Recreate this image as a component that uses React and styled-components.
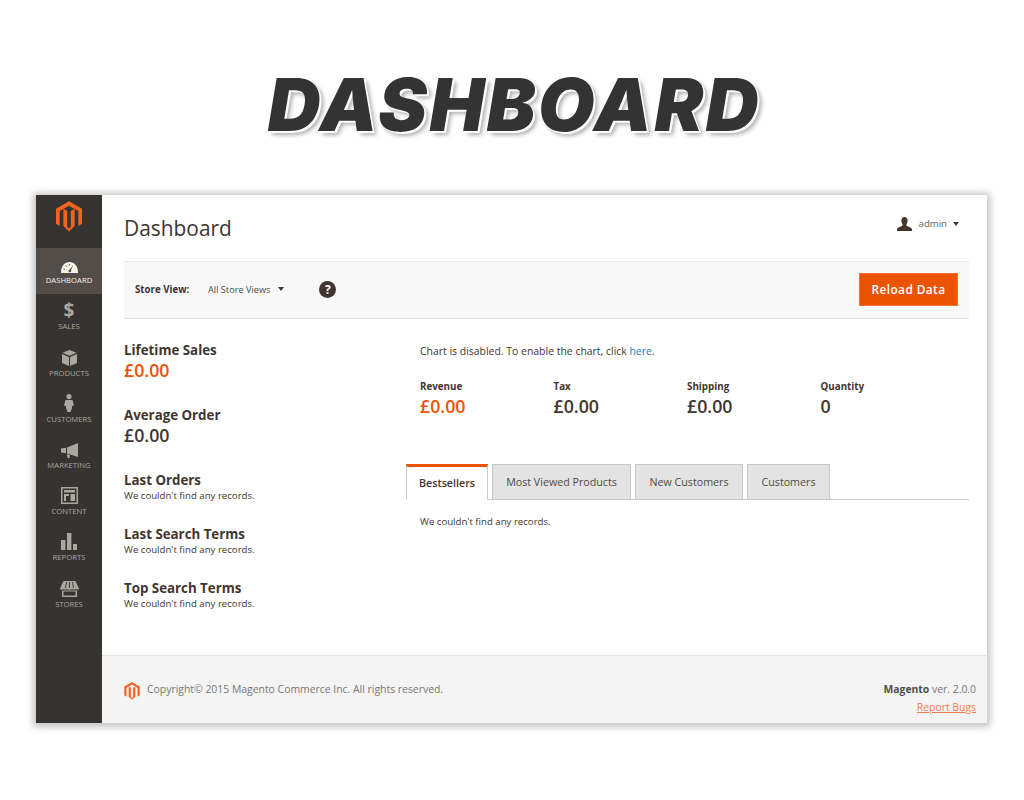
import React from "react";
import styled, { createGlobalStyle } from "styled-components";

const GlobalStyle = createGlobalStyle`
  html, body { margin: 0; padding: 0; background: #fff; }
  body { font-family: "Open Sans", "Liberation Sans", sans-serif; color: #41362f; }
  * { box-sizing: border-box; }
`;

const Page = styled.div`
  width: 1024px;
  height: 800px;
  padding: 0 37px 0 36px;
  overflow: hidden;
`;

const BigTitle = styled.h1`
  height: 195px;
  margin: 0;
  padding: 62px 0 0 6px;
  text-align: center;
  font-family: Inter, "Liberation Sans", sans-serif;
  font-size: 73px;
  line-height: 86px;
  font-weight: 900;
  font-style: italic;
  color: #333;
  letter-spacing: 2.6px;
  text-shadow: 1px 1px 0 #fff, 2px 2px 0 #fff, 4px 4px 4px rgba(0, 0, 0, 0.32);
`;

const Frame = styled.div`
  display: flex;
  height: 528px;
  box-shadow: 0 1px 7px 3px rgba(0, 0, 0, 0.24);
`;

const Sidebar = styled.nav`
  width: 66px;
  flex: none;
  background: #373330;
`;

const LogoCell = styled.div`
  height: 53px;
  display: flex;
  justify-content: center;
  padding-top: 6px;
`;

const NavItem = styled.div`
  height: 46.2px;
  display: flex;
  flex-direction: column;
  align-items: center;
  justify-content: flex-end;
  padding-bottom: 8px;
  background: ${p => (p.$active ? "#524d49" : "transparent")};
  color: ${p => (p.$active ? "#f7f3eb" : "#aaa6a0")};
`;

const NavIcon = styled.div`
  height: 18px;
  display: flex;
  align-items: flex-end;
  justify-content: center;
  font-size: 19px;
  line-height: 18px;
  font-weight: 700;
  margin-bottom: 2px;
`;

const NavLabel = styled.span`
  font-size: 7.7px;
  line-height: 11px;
  text-transform: uppercase;
  white-space: nowrap;
`;

const Main = styled.main`
  flex: 1;
  display: flex;
  flex-direction: column;
  min-width: 0;
`;

const Content = styled.div`
  flex: 1;
  padding: 0 18px 0 22px;
`;

const Header = styled.header`
  height: 66px;
  display: flex;
  align-items: center;
  justify-content: space-between;
`;

const PageTitle = styled.h2`
  margin: 0;
  font-size: 20.9px;
  font-weight: 400;
  color: #41362f;
`;

const UserBox = styled.div`
  display: flex;
  align-items: center;
  margin: -9px 10px 0 0;
  font-size: 9.6px;
  color: #676056;
`;

const UserName = styled.span`
  margin: 0 6px 0 7px;
`;

const Caret = styled.i`
  display: inline-block;
  border-left: 3px solid transparent;
  border-right: 3px solid transparent;
  border-top: 4px solid #41362f;
`;

const Toolbar = styled.div`
  height: 58px;
  display: flex;
  align-items: center;
  padding: 0 11px 2px;
  background: #f8f8f8;
  border-top: 1px solid #e9e9e9;
  border-bottom: 1px solid #e3e3e3;
`;

const StoreLabel = styled.span`
  width: 73px;
  font-size: 9.7px;
  font-weight: 700;
  color: #41362f;
`;

const StoreValue = styled.span`
  font-size: 9.2px;
  color: #514943;
  margin-right: 7px;
`;

const ToolbarCaret = styled(Caret)`
  margin-left: 1px;
`;

const HelpBadge = styled.span`
  width: 17px;
  height: 17px;
  margin-left: 35px;
  border-radius: 50%;
  background: #41362f;
  color: #fff;
  font-size: 12px;
  font-weight: 700;
  line-height: 17px;
  text-align: center;
`;

const ReloadButton = styled.button`
  width: 99px;
  height: 33px;
  margin-left: auto;
  border: 1px solid #f0722d;
  background: #eb5202;
  color: #fff;
  font-family: "Open Sans", sans-serif;
  font-size: 11.9px;
  font-weight: 600;
  letter-spacing: 0.4px;
  padding: 0;
`;

const Columns = styled.div`
  display: flex;
`;

const LeftColumn = styled.section`
  width: 282px;
  flex: none;
  padding-top: 22px;
`;

const Metric = styled.div`
  height: 65px;
`;

const MetricTitle = styled.div`
  font-size: 13.3px;
  line-height: 19px;
  font-weight: 700;
  color: #41362f;
`;

const MetricValue = styled.div`
  font-size: 17.8px;
  line-height: 23px;
  margin-top: -1px;
  font-weight: 600;
  color: ${p => (p.$accent ? "#eb5202" : "#41362f")};
`;

const RecordBlock = styled.div`
  height: 54px;
`;

const SmallText = styled.div`
  font-size: 9.65px;
  line-height: 12px;
  color: #41362f;
`;

const RightColumn = styled.section`
  flex: 1;
  min-width: 0;
  padding-top: 24px;
`;

const ChartNote = styled.p`
  margin: 0 0 0 14px;
  font-size: 10.45px;
  line-height: 16px;
  color: #41362f;
`;

const HereLink = styled.a`
  color: #1979c3;
`;

const Stats = styled.div`
  display: grid;
  grid-template-columns: repeat(4, 133.5px);
  margin: 21px 0 0 14px;
`;

const StatLabel = styled.div`
  font-size: 9.8px;
  line-height: 14px;
  font-weight: 700;
  color: #41362f;
`;

const StatValue = styled.div`
  font-size: 17.8px;
  line-height: 24px;
  font-weight: 600;
  color: ${p => (p.$accent ? "#eb5202" : "#41362f")};
`;

const Tabs = styled.div`
  display: flex;
  gap: 4px;
  height: 36px;
  margin-top: 46px;
  border-bottom: 1px solid #c9c9c9;
`;

const Tab = styled.div`
  width: ${p => p.$width}px;
  height: ${p => (p.$active ? 36 : 35)}px;
  display: flex;
  align-items: center;
  justify-content: center;
  font-size: 10.7px;
  font-weight: ${p => (p.$active ? 600 : 400)};
  color: ${p => (p.$active ? "#41362f" : "#514943")};
  background: ${p => (p.$active ? "#fff" : "#e3e3e3")};
  border: 1px solid #c9c9c9;
  border-bottom: ${p => (p.$active ? "1px solid #fff" : "none")};
  border-top: ${p => (p.$active ? "3px solid #eb5202" : "1px solid #c9c9c9")};
`;

const TabBody = styled(SmallText)`
  margin: 16px 0 0 14px;
`;

const Footer = styled.footer`
  height: 68px;
  flex: none;
  display: flex;
  justify-content: space-between;
  padding: 26px 11px 0 22px;
  background: #f4f4f4;
  border-top: 1px solid #e3e3e3;
`;

const Copyright = styled.div`
  display: flex;
  align-items: flex-start;
  gap: 7px;
  font-size: 10.42px;
  line-height: 15px;
  color: #777;
`;

const Version = styled.div`
  text-align: right;
  font-size: 10.4px;
  line-height: 15px;
  color: #777;
`;

const VersionName = styled.b`
  color: #4f4f4f;
  font-weight: 700;
`;

const BugLink = styled.a`
  display: block;
  margin-top: 3px;
  color: #f47a52;
  text-decoration: underline;
`;

const MagentoLogo = ({ size, height, color = "#f26322" }) => (
  <svg width={size} height={height} viewBox="0 0 24 28" fill={color}>
    <path d="M12 0 24 6.9V20.8L20.6 22.8V8.9L12 4 3.4 8.9V22.8L0 20.8V6.9Z" />
    <path d="M13.7 23.8V8.9L17.2 6.9V22.8L12 27.8 6.8 22.8V6.9L10.3 8.9V23.8L12 24.8Z" />
  </svg>
);

const GaugeIcon = () => (
  <svg width="17" height="11" viewBox="0 0 17 11" fill="currentColor">
    <path d="M0 11C-.2 4.5 3.5 0 8.5 0S17.2 4.5 17 11Z" />
    <path d="M8 8.5 12.2 3 9.6 9.2Z" fill="#524d49" />
    <circle cx="8.8" cy="9" r="1.3" fill="#524d49" />
    <path d="M2.5 7 4 7.4M4.8 3.5 5.7 4.6M8.5 2V3.4" stroke="#524d49" fill="none" />
  </svg>
);

const BoxIcon = () => (
  <svg width="15" height="16" viewBox="0 0 15 16" fill="currentColor">
    <path d="M7.5 0 14.5 2.8 7.5 5.8 .5 2.8Z" />
    <path d="M0 4 7 7V16L0 13Z" />
    <path d="M15 4 8 7V16L15 13Z" />
  </svg>
);

const PersonIcon = () => (
  <svg width="10" height="18" viewBox="0 0 10 18" fill="currentColor">
    <circle cx="5" cy="2.6" r="2.6" />
    <path d="M1.5 6H8.5L10 11.5 8 12V14L6.5 18H3.5L2 14V12L0 11.5Z" />
  </svg>
);

const MegaphoneIcon = () => (
  <svg width="17" height="15" viewBox="0 0 17 15" fill="currentColor">
    <path d="M17 0V14L6 10.5V4.5Z" />
    <path d="M0 5.5 5 4.8V10.2L0 9.5Z" />
    <path d="M6 11 9 12 8.5 15H6.5Z" />
  </svg>
);

const ContentIcon = () => (
  <svg width="17" height="17" viewBox="0 0 17 17" fill="none" stroke="currentColor">
    <rect x=".75" y=".75" width="15.5" height="15.5" strokeWidth="1.5" />
    <path d="M3 3H14V5.5H3ZM3 7H8V14H3ZM9.5 7H14V14H9.5Z" fill="currentColor" stroke="none" />
    <path d="M5 9H8V14H5Z" fill="#373330" stroke="none" />
  </svg>
);

const ReportsIcon = () => (
  <svg width="16" height="17" viewBox="0 0 16 17" fill="currentColor">
    <rect x="0" y="7" width="4.4" height="10" />
    <rect x="6" y="0" width="4.4" height="17" />
    <rect x="12" y="11" width="4" height="6" />
  </svg>
);

const StoreIcon = () => (
  <svg width="19" height="16" viewBox="0 0 19 16" fill="currentColor">
    <path d="M3.5 0H15.5L19 7.5C19 9 16.5 9 15.5 8 14.5 9 13 9 12.5 8 11.5 9 7.5 9 6.5 8 6 9 4.5 9 3.5 8 2.5 9 0 9 0 7.5Z" />
    <path d="M2 9.5H17V16H2ZM3.5 10.5V14.5H15.5V10.5Z" fillRule="evenodd" />
    <path d="M6.5 1 5.5 7M9.5 1V7M12.5 1 13.5 7" stroke="#373330" strokeWidth=".9" />
  </svg>
);

const UserIcon = () => (
  <svg width="15" height="14" viewBox="0 0 15 14" fill="#41362f">
    <path d="M4.4 3.6C4.4 1.4 5.7 0 7.5 0S10.6 1.4 10.6 3.6 9.6 7.4 9.3 8C9.2 9.3 14.4 10 15 12.2V14H0V12.2C.6 10 5.8 9.3 5.7 8 5.4 7.4 4.4 5.8 4.4 3.6Z" />
  </svg>
);

const navItems = [
  { label: "Dashboard", icon: <GaugeIcon />, active: true },
  { label: "Sales", icon: "$" },
  { label: "Products", icon: <BoxIcon /> },
  { label: "Customers", icon: <PersonIcon /> },
  { label: "Marketing", icon: <MegaphoneIcon /> },
  { label: "Content", icon: <ContentIcon /> },
  { label: "Reports", icon: <ReportsIcon /> },
  { label: "Stores", icon: <StoreIcon /> },
];

const stats = [
  { label: "Revenue", value: "£0.00", accent: true },
  { label: "Tax", value: "£0.00" },
  { label: "Shipping", value: "£0.00" },
  { label: "Quantity", value: "0" },
];

const tabs = [
  { label: "Bestsellers", width: 82, active: true },
  { label: "Most Viewed Products", width: 139 },
  { label: "New Customers", width: 108 },
  { label: "Customers", width: 83 },
];

const NO_RECORDS = "We couldn't find any records.";

export default function App() {
  return (
    <Page>
      <GlobalStyle />
      <BigTitle>DASHBOARD</BigTitle>
      <Frame>
        <Sidebar>
          <LogoCell>
            <MagentoLogo size={26} height={31} />
          </LogoCell>
          {navItems.map(item => (
            <NavItem key={item.label} $active={item.active}>
              <NavIcon>{item.icon}</NavIcon>
              <NavLabel>{item.label}</NavLabel>
            </NavItem>
          ))}
        </Sidebar>
        <Main>
          <Content>
            <Header>
              <PageTitle>Dashboard</PageTitle>
              <UserBox>
                <UserIcon />
                <UserName>admin</UserName>
                <Caret />
              </UserBox>
            </Header>
            <Toolbar>
              <StoreLabel>Store View:</StoreLabel>
              <StoreValue>All Store Views</StoreValue>
              <ToolbarCaret />
              <HelpBadge>?</HelpBadge>
              <ReloadButton>Reload Data</ReloadButton>
            </Toolbar>
            <Columns>
              <LeftColumn>
                <Metric>
                  <MetricTitle>Lifetime Sales</MetricTitle>
                  <MetricValue $accent>£0.00</MetricValue>
                </Metric>
                <Metric>
                  <MetricTitle>Average Order</MetricTitle>
                  <MetricValue>£0.00</MetricValue>
                </Metric>
                {["Last Orders", "Last Search Terms", "Top Search Terms"].map(title => (
                  <RecordBlock key={title}>
                    <MetricTitle>{title}</MetricTitle>
                    <SmallText>{NO_RECORDS}</SmallText>
                  </RecordBlock>
                ))}
              </LeftColumn>
              <RightColumn>
                <ChartNote>
                  Chart is disabled. To enable the chart, click <HereLink>here</HereLink>.
                </ChartNote>
                <Stats>
                  {stats.map(stat => (
                    <div key={stat.label}>
                      <StatLabel>{stat.label}</StatLabel>
                      <StatValue $accent={stat.accent}>{stat.value}</StatValue>
                    </div>
                  ))}
                </Stats>
                <Tabs>
                  {tabs.map(tab => (
                    <Tab key={tab.label} $width={tab.width} $active={tab.active}>
                      {tab.label}
                    </Tab>
                  ))}
                </Tabs>
                <TabBody>{NO_RECORDS}</TabBody>
              </RightColumn>
            </Columns>
          </Content>
          <Footer>
            <Copyright>
              <MagentoLogo size={16} height={18} />
              <span>Copyright© 2015 Magento Commerce Inc. All rights reserved.</span>
            </Copyright>
            <Version>
              <VersionName>Magento</VersionName> ver. 2.0.0
              <BugLink>Report Bugs</BugLink>
            </Version>
          </Footer>
        </Main>
      </Frame>
    </Page>
  );
}
